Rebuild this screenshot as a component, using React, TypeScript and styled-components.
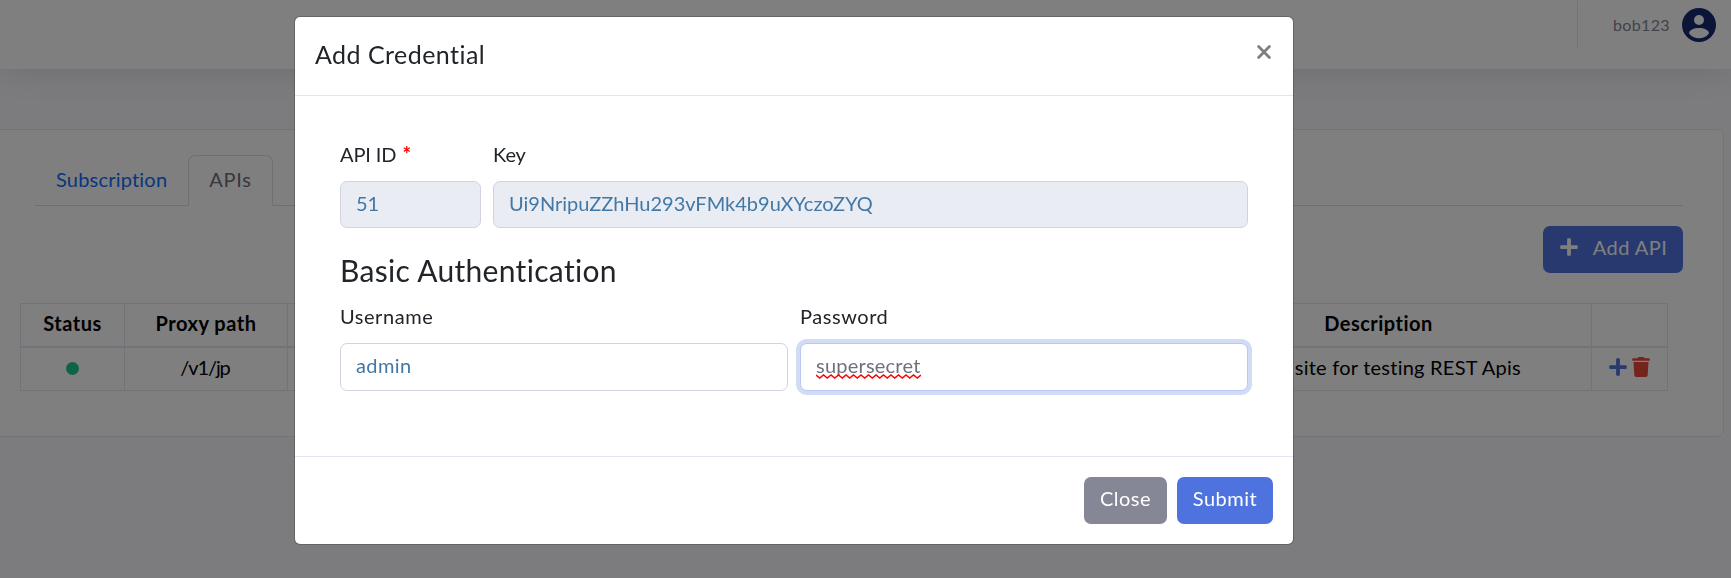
import React from 'react';
import styled, { createGlobalStyle } from 'styled-components';
import { FaPlus, FaTrash } from 'react-icons/fa';

const Global = createGlobalStyle`
  *, *::before, *::after { box-sizing: border-box; }
  html, body { margin: 0; height: 100%; overflow: hidden; }
  body {
    background: #f8f9fc;
    color: #000;
    font: 400 20px/30px Lato, "Open Sans", sans-serif;
  }
`;

const Topbar = styled.header`
  display: flex;
  align-items: center;
  justify-content: flex-end;
  height: 69px;
  padding: 0 15px 19px 0;
  background: #fff;
  box-shadow: 0 3px 35px rgba(58, 59, 69, 0.15);
`;
const Divider = styled.div`
  width: 1px;
  height: 48px;
  margin-right: 35px;
  background: #e3e6f0;
`;
const UserName = styled.span`
  margin-right: 12px;
  font-size: 16px;
  line-height: 24px;
  letter-spacing: 0.36px;
  color: #858796;
`;
const Avatar = styled.svg`
  display: block;
  width: 34px;
  height: 34px;
`;

const Card = styled.section`
  height: 308px;
  margin: 60px 7px 0 -10px;
  padding: 25px 40px 0 30px;
  background: #fff;
  border: 1px solid #e3e6f0;
  border-radius: 7px;
`;
const Tabs = styled.nav`
  display: flex;
  height: 51px;
  margin-left: 14px;
  border-bottom: 1px solid #dddfeb;
`;
const Tab = styled.a<{ $active?: boolean }>`
  height: 51px;
  padding: 8px 20px 0;
  border: 1px solid;
  border-color: ${p => (p.$active ? '#dddfeb #dddfeb #fff' : 'transparent')};
  border-radius: 7px 7px 0 0;
  background: ${p => (p.$active ? '#fff' : 'transparent')};
  background-clip: padding-box;
  color: ${p => (p.$active ? '#6e707e' : '#0d6efd')};
  letter-spacing: ${p => (p.$active ? '0.7px' : '0.2px')};
`;
const Actions = styled.div`
  display: flex;
  justify-content: flex-end;
  margin: 20px 0 30px;
`;
const Button = styled.button<{ $tone: 'primary' | 'secondary'; $width: number }>`
  display: flex;
  justify-content: center;
  width: ${p => p.$width}px;
  height: 47px;
  padding: 6px 0 0;
  border: 0;
  border-radius: 7px;
  background: ${p => (p.$tone === 'primary' ? '#4e73df' : '#858796')};
  color: #fff;
  font: inherit;
  letter-spacing: 0.48px;
  svg { margin: 5px 14px 0 0; }
`;

const Table = styled.table`
  width: 1648px;
  margin-left: -1px;
  border-collapse: collapse;
  table-layout: fixed;
  text-align: center;
  th, td { border: 1px solid #e3e6f0; padding: 4px 0 0; vertical-align: top; }
  th { height: 43px; border-bottom-width: 2px; font-weight: 700; letter-spacing: 0.5px; }
  td { height: 44px; letter-spacing: 0.24px; }
`;
const PathCell = styled.td`
  && { letter-spacing: -1.1px; padding-right: 2px; }
`;
const DescriptionCell = styled.td`
  && { padding-right: 70px; text-align: right; }
`;
const StatusDot = styled.span`
  display: block;
  width: 13px;
  height: 13px;
  margin: 10px auto 0;
  border-radius: 50%;
  background: #1cc88a;
`;
const RowActions = styled.div`
  display: flex;
  justify-content: center;
  gap: 3px;
  padding-top: 5px;
`;

const Backdrop = styled.div`
  position: fixed;
  inset: 0;
  display: flex;
  align-items: flex-start;
  padding: 16px 0 0 294px;
  background: rgba(0, 0, 0, 0.5);
`;
const Dialog = styled.div`
  display: flex;
  flex-direction: column;
  width: 1000px;
  height: 529px;
  border: 1px solid rgba(0, 0, 0, 0.2);
  border-radius: 6px;
  background: #fff;
  background-clip: padding-box;
  color: #212529;
`;
const DialogHeader = styled.div`
  display: flex;
  justify-content: space-between;
  height: 79px;
  padding: 19px 22px 0 20px;
  border-bottom: 1px solid #e3e6f0;
`;
const Title = styled.h5`
  margin: 0;
  font-size: 25px;
  font-weight: 400;
  line-height: 37px;
  letter-spacing: 0.46px;
`;
const CloseIcon = styled.svg`
  width: 14px;
  height: 14px;
  margin-top: 9px;
`;
const DialogBody = styled.form`
  flex: 1;
  padding: 43px 45px 0;
`;
const FieldRow = styled.div<{ $columns: string }>`
  display: grid;
  grid-template-columns: ${p => p.$columns};
  gap: 12px;
`;
const Field = styled.label`
  display: flex;
  flex-direction: column;
  gap: 12px;
`;
const Caption = styled.span<{ $tight?: boolean }>`
  letter-spacing: ${p => (p.$tight ? '-0.1px' : '0.55px')};
`;
const Required = styled.span`
  margin-left: 1px;
  color: #f00;
  font-weight: 700;
`;
const Control = styled.div<{ $disabled?: boolean; $focus?: boolean }>`
  height: ${p => (p.$disabled ? 47 : 48)}px;
  padding: 6px 15px;
  border: 1px solid ${p => (p.$focus ? '#bac8f3' : '#d1d3e2')};
  border-radius: 7px;
  background: ${p => (p.$disabled ? '#eaecf4' : '#fff')};
  box-shadow: ${p => (p.$focus ? '0 0 0 4px #d3dcf7' : 'none')};
  color: ${p => (p.$focus ? '#6e707e' : '#4178a5')};
  letter-spacing: ${p => (p.$disabled ? '0' : p.$focus ? '0.22px' : '0.4px')};
`;
const Misspelled = styled.span`
  position: relative;
  display: inline-block;
  svg { position: absolute; left: 0; bottom: 1px; width: 105px; height: 5px; }
`;
const SectionTitle = styled.h4`
  margin: 21px 0 10px;
  font-size: 30px;
  font-weight: 400;
  line-height: 42px;
  letter-spacing: 0.32px;
`;
const DialogFooter = styled.div`
  display: flex;
  justify-content: flex-end;
  gap: 10px;
  height: 88px;
  padding: 20px 20px 0;
  border-top: 1px solid #e3e6f0;
`;

const wave = 'M0 1 ' + Array.from({ length: 14 }, () => 'l3.75 3 l3.75 -3').join(' ');

export default function App() {
  return (
    <>
      <Global />
      <Topbar>
        <Divider />
        <UserName>bob123</UserName>
        <Avatar viewBox="0 0 34 34">
          <circle cx="17" cy="17" r="17" fill="#142a70" />
          <circle cx="17" cy="12" r="5" fill="#fff" />
          <path d="M7 25.2C7 22 12 20 17 20s10 2 10 5.200c-2 3.200-6 5-10 5s-8-1.800-10-5z" fill="#fff" />
        </Avatar>
      </Topbar>
      <Card>
        <Tabs>
          <Tab>Subscription</Tab>
          <Tab $active>APIs</Tab>
        </Tabs>
        <Actions>
          <Button $tone="primary" $width={140}><FaPlus size={20} />Add API</Button>
        </Actions>
        <Table>
          <colgroup>
            <col style={{ width: 104 }} /><col style={{ width: 163 }} /><col />
            <col style={{ width: 426 }} /><col style={{ width: 76 }} />
          </colgroup>
          <thead>
            <tr><th>Status</th><th>Proxy path</th><th /><th>Description</th><th /></tr>
          </thead>
          <tbody>
            <tr>
              <td><StatusDot /></td>
              <PathCell>/v1/jp</PathCell>
              <td />
              <DescriptionCell>site for testing REST Apis</DescriptionCell>
              <td><RowActions><FaPlus size={20} color="#4e73df" /><FaTrash size={20} color="#e74a3b" /></RowActions></td>
            </tr>
          </tbody>
        </Table>
      </Card>
      <Backdrop>
        <Dialog role="dialog">
          <DialogHeader>
            <Title>Add Credential</Title>
            <CloseIcon viewBox="0 0 14 14" stroke="#7f7f7f" strokeWidth="2.8" strokeLinecap="round">
              <path d="M1.600 1.600 12.400 12.400M12.400 1.600 1.600 12.400" />
            </CloseIcon>
          </DialogHeader>
          <DialogBody>
            <FieldRow $columns="141px 1fr">
              <Field><Caption $tight>API ID <Required>*</Required></Caption><Control $disabled>51</Control></Field>
              <Field><Caption $tight>Key</Caption><Control $disabled>Ui9NripuZZhHu293vFMk4b9uXYczoZYQ</Control></Field>
            </FieldRow>
            <SectionTitle>Basic Authentication</SectionTitle>
            <FieldRow $columns="1fr 1fr">
              <Field><Caption>Username</Caption><Control>admin</Control></Field>
              <Field>
                <Caption>Password</Caption>
                <Control $focus>
                  <Misspelled>
                    supersecret
                    <svg viewBox="0 0 105 5" fill="none" stroke="#f00" strokeWidth="1.500"><path d={wave} /></svg>
                  </Misspelled>
                </Control>
              </Field>
            </FieldRow>
          </DialogBody>
          <DialogFooter>
            <Button $tone="secondary" $width={83}>Close</Button>
            <Button $tone="primary" $width={96}>Submit</Button>
          </DialogFooter>
        </Dialog>
      </Backdrop>
    </>
  );
}
